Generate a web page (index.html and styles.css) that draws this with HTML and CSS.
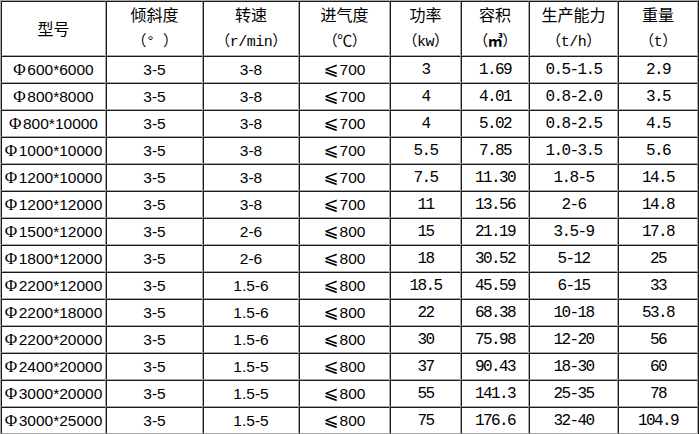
FILE: index.html
```html
<!DOCTYPE html>
<html lang="zh-CN">
<head>
<meta charset="utf-8">
<title>参数表</title>
<link rel="stylesheet" href="styles.css">
</head>
<body>
<table class="spec">
  <thead>
    <tr>
      <th class="c1">型号</th>
      <th class="c2">倾斜度<br><span class="unit">（°&nbsp;）</span></th>
      <th class="c3">转速<br><span class="unit">（r/min）</span></th>
      <th class="c4">进气度<br><span class="unit">（℃）</span></th>
      <th class="c5">功率<br><span class="unit">（kw）</span></th>
      <th class="c6">容积<br><span class="unit">（<span class="cube">㎥</span>）</span></th>
      <th class="c7">生产能力<br><span class="unit">（t/h）</span></th>
      <th class="c8">重量<br><span class="unit">（t）</span></th>
    </tr>
  </thead>
  <tbody>
    <tr><td class="s"><span class="phi">Φ</span>600*6000</td><td class="s">3-5</td><td class="s">3-8</td><td class="s"><span class="le">⩽</span>700</td><td class="m">3</td><td class="m">1.69</td><td class="m">0.5-1.5</td><td class="m">2.9</td></tr>
    <tr><td class="s"><span class="phi">Φ</span>800*8000</td><td class="s">3-5</td><td class="s">3-8</td><td class="s"><span class="le">⩽</span>700</td><td class="m">4</td><td class="m">4.01</td><td class="m">0.8-2.0</td><td class="m">3.5</td></tr>
    <tr><td class="s"><span class="phi">Φ</span>800*10000</td><td class="s">3-5</td><td class="s">3-8</td><td class="s"><span class="le">⩽</span>700</td><td class="m">4</td><td class="m">5.02</td><td class="m">0.8-2.5</td><td class="m">4.5</td></tr>
    <tr><td class="s"><span class="phi">Φ</span>1000*10000</td><td class="s">3-5</td><td class="s">3-8</td><td class="s"><span class="le">⩽</span>700</td><td class="m">5.5</td><td class="m">7.85</td><td class="m">1.0-3.5</td><td class="m">5.6</td></tr>
    <tr><td class="s"><span class="phi">Φ</span>1200*10000</td><td class="s">3-5</td><td class="s">3-8</td><td class="s"><span class="le">⩽</span>700</td><td class="m">7.5</td><td class="m">11.30</td><td class="m">1.8-5</td><td class="m">14.5</td></tr>
    <tr><td class="s"><span class="phi">Φ</span>1200*12000</td><td class="s">3-5</td><td class="s">3-8</td><td class="s"><span class="le">⩽</span>700</td><td class="m">11</td><td class="m">13.56</td><td class="m">2-6</td><td class="m">14.8</td></tr>
    <tr><td class="s"><span class="phi">Φ</span>1500*12000</td><td class="s">3-5</td><td class="s">2-6</td><td class="s"><span class="le">⩽</span>800</td><td class="m">15</td><td class="m">21.19</td><td class="m">3.5-9</td><td class="m">17.8</td></tr>
    <tr><td class="s"><span class="phi">Φ</span>1800*12000</td><td class="s">3-5</td><td class="s">2-6</td><td class="s"><span class="le">⩽</span>800</td><td class="m">18</td><td class="m">30.52</td><td class="m">5-12</td><td class="m">25</td></tr>
    <tr><td class="s"><span class="phi">Φ</span>2200*12000</td><td class="s">3-5</td><td class="s">1.5-6</td><td class="s"><span class="le">⩽</span>800</td><td class="m">18.5</td><td class="m">45.59</td><td class="m">6-15</td><td class="m">33</td></tr>
    <tr><td class="s"><span class="phi">Φ</span>2200*18000</td><td class="s">3-5</td><td class="s">1.5-6</td><td class="s"><span class="le">⩽</span>800</td><td class="m">22</td><td class="m">68.38</td><td class="m">10-18</td><td class="m">53.8</td></tr>
    <tr><td class="s"><span class="phi">Φ</span>2200*20000</td><td class="s">3-5</td><td class="s">1.5-6</td><td class="s"><span class="le">⩽</span>800</td><td class="m">30</td><td class="m">75.98</td><td class="m">12-20</td><td class="m">56</td></tr>
    <tr><td class="s"><span class="phi">Φ</span>2400*20000</td><td class="s">3-5</td><td class="s">1.5-5</td><td class="s"><span class="le">⩽</span>800</td><td class="m">37</td><td class="m">90.43</td><td class="m">18-30</td><td class="m">60</td></tr>
    <tr><td class="s"><span class="phi">Φ</span>3000*20000</td><td class="s">3-5</td><td class="s">1.5-5</td><td class="s"><span class="le">⩽</span>800</td><td class="m">55</td><td class="m">141.3</td><td class="m">25-35</td><td class="m">78</td></tr>
    <tr><td class="s"><span class="phi">Φ</span>3000*25000</td><td class="s">3-5</td><td class="s">1.5-5</td><td class="s"><span class="le">⩽</span>800</td><td class="m">75</td><td class="m">176.6</td><td class="m">32-40</td><td class="m">104.9</td></tr>
  </tbody>
</table>
</body>
</html>
```

FILE: styles.css
```css
html, body {
  margin: 0;
  padding: 0;
  background: #ffffff;
}

.spec {
  width: 699px;
  table-layout: fixed;
  border-collapse: separate;
  border-spacing: 0;
  border-top: 1px solid #a8a8a8;
  border-left: 1px solid #a8a8a8;
  border-right: 1px solid #1a1a1a;
  border-bottom: 1px solid #1a1a1a;
  color: #000;
  font-family: "Liberation Sans", "Noto Sans CJK SC", sans-serif;
}

.spec th,
.spec td {
  box-sizing: border-box;
  padding: 0;
  text-align: center;
  vertical-align: middle;
  white-space: nowrap;
  border-top: 1px solid #1a1a1a;
  border-left: 1px solid #1a1a1a;
  border-right: 1px solid #a8a8a8;
  border-bottom: 1px solid #a8a8a8;
}

.spec th {
  height: 53px;
  font-weight: normal;
  font-family: "Noto Sans CJK SC", sans-serif;
  font-size: 16px;
  line-height: 25px;
}

.spec td {
  height: 27px;
  line-height: 18px;
}

.c1 { width: 105px; }
.c2 { width: 97px; }
.c3 { width: 96px; }
.c4 { width: 91px; }
.c5 { width: 71px; }
.c6 { width: 68px; }
.c7 { width: 89px; }
.c8 { width: 80px; }

.unit {
  font-family: "Liberation Mono", "Noto Sans CJK SC", monospace;
  font-size: 15px;
  letter-spacing: -0.5px;
}

.cube {
  font-family: "Noto Sans CJK SC", sans-serif;
  font-weight: bold;
  font-size: 15px;
}

.s {
  font-family: "Liberation Sans", sans-serif;
  font-size: 15.5px;
}

.m {
  font-family: "Liberation Mono", monospace;
  font-size: 16px;
  letter-spacing: -1.6px;
}

.phi {
  display: inline-block;
  width: 14px;
  text-align: left;
  font-family: "Liberation Serif", serif;
  font-size: 17px;
}

.le {
  font-family: "DejaVu Sans", sans-serif;
  font-size: 18px;
  margin-right: 1px;
}
```
